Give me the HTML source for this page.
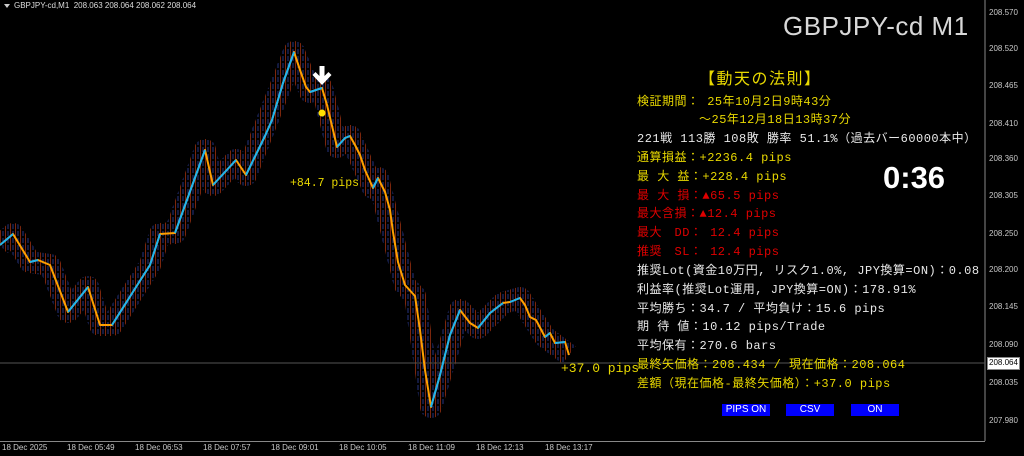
<!DOCTYPE html>
<html><head><meta charset="utf-8"><style>
body{margin:0;background:#000;width:1024px;height:456px;overflow:hidden;position:relative;font-family:"Liberation Sans","Noto Sans CJK JP",sans-serif}
.a{position:absolute;white-space:nowrap}
.p{font-family:"Liberation Sans",sans-serif;font-size:8px;color:#c8c8c8;left:989px}
.t{font-size:8px;color:#c8c8c8;top:443px}
.l{left:637px;font-size:12px;font-family:"Liberation Mono","Noto Sans CJK JP",monospace;line-height:14px;letter-spacing:.5px}
.y{color:#e8d800}.w{color:#e8e8e8}.r{color:#e00000}
.b{position:absolute;top:404px;height:12px;width:48px;background:#0000ff;color:#fff;font-size:10px;text-align:center;line-height:12px}
</style></head><body>
<svg class="a" style="left:0;top:0" width="1024" height="456">
<defs>
<pattern id="st" width="5" height="7" patternUnits="userSpaceOnUse">
<rect x="0" y="0" width="1" height="7" fill="#9a3010"/>
<rect x="2.5" y="0" width="1" height="5" fill="#3040a0"/>
</pattern>
<mask id="mk"><polyline fill="none" stroke="#fff" stroke-width="22" stroke-linejoin="round" points="0,245 13,234 30,262 50,265 68,312 88,287 100,325 112,325 150,265 160,234 175,233 205,150 213,185 236,160 246,175 294,52 310,92 322,88 337,147 350,136 373,188 378,178 405,285 415,296 431,407 460,310 478,328 503,303 520,298 545,337 569,355"/></mask>
</defs>
<rect x="0" y="30" width="580" height="400" fill="url(#st)" mask="url(#mk)" opacity=".8"/>
<line x1="985" y1="0" x2="985" y2="441" stroke="#888" stroke-width="1"/>
<line x1="0" y1="441.5" x2="985" y2="441.5" stroke="#888" stroke-width="1"/>
<line x1="0" y1="363" x2="985" y2="363" stroke="#555" stroke-width="1"/>
<g fill="none" stroke-linejoin="round">
<g stroke="#ffa000" stroke-width="2">
<polyline points="0,245 13,234 30,262 38,260 50,265 68,312 88,287 100,325 112,325 150,265 160,234 175,233 205,150 213,185 236,160 246,175 265,136 272,120 283,83 294,52 300,70 306,87 310,92 322,88 327,105 333,130 337,147 345,138 350,136 355,145 360,155 365,170 373,188 378,178 385,192 390,210 393,232 398,262 405,285 415,296 420,330 425,370 431,407 440,375 450,335 460,310 470,323 478,328 490,313 503,303 510,302 520,298 525,305 530,317 536,320 545,337 550,333 555,343 565,342 569,355"/>
</g>
<g stroke="#1eb4f0" stroke-width="2">
<polyline points="0,245 13,234"/><polyline points="30,262 38,260"/><polyline points="68,312 88,287"/>
<polyline points="112,325 150,265 160,234"/><polyline points="175,233 205,150"/><polyline points="213,185 236,160"/>
<polyline points="246,175 265,136 272,120 283,83 294,52"/><polyline points="310,92 322,88"/><polyline points="337,147 345,138 350,136"/>
<polyline points="373,188 378,178"/><polyline points="431,407 440,375 450,335 460,310"/>
<polyline points="478,328 490,313 503,303"/><polyline points="510,302 520,298"/><polyline points="545,337 550,333"/><polyline points="555,343 565,342"/>
</g></g>
<circle cx="322" cy="113" r="3.5" fill="#ffe000"/>
<path d="M319.5,66 h5 v10 l4,-4 l3,3 l-9.5,10 l-9.5,-10 l3,-3 l4,4z" fill="#fff"/>
<polygon points="4,4 10,4 7,8" fill="#ccc"/>
<rect x="987.5" y="357.5" width="32" height="12" fill="#fff" stroke="#888"/>
</svg>
<div class="a" style="left:14px;top:1px;font-size:8px;color:#ddd">GBPJPY-cd,M1&nbsp; 208.063 208.064 208.062 208.064</div>
<div class="a" style="left:783px;top:11px;font-size:26px;color:#d8d8d8;letter-spacing:.5px">GBPJPY-cd M1</div>
<div class="a p" style="top:8px">208.570</div><div class="a p" style="top:44px">208.520</div>
<div class="a p" style="top:81px">208.465</div><div class="a p" style="top:119px">208.410</div>
<div class="a p" style="top:154px">208.360</div><div class="a p" style="top:191px">208.305</div>
<div class="a p" style="top:229px">208.250</div><div class="a p" style="top:265px">208.200</div>
<div class="a p" style="top:302px">208.145</div><div class="a p" style="top:340px">208.090</div>
<div class="a p" style="top:358px;color:#000">208.064</div><div class="a p" style="top:378px">208.035</div>
<div class="a p" style="top:416px">207.980</div>
<div class="a t" style="left:2px">18 Dec 2025</div><div class="a t" style="left:67px">18 Dec 05:49</div>
<div class="a t" style="left:135px">18 Dec 06:53</div><div class="a t" style="left:203px">18 Dec 07:57</div>
<div class="a t" style="left:271px">18 Dec 09:01</div><div class="a t" style="left:339px">18 Dec 10:05</div>
<div class="a t" style="left:408px">18 Dec 11:09</div><div class="a t" style="left:476px">18 Dec 12:13</div>
<div class="a t" style="left:545px">18 Dec 13:17</div>
<div class="a y" style="left:290px;top:177px;font-size:11.5px;font-family:'Liberation Mono',monospace">+84.7 pips</div>
<div class="a y" style="left:561px;top:361px;font-size:13px;font-family:'Liberation Mono',monospace">+37.0 pips</div>
<div class="a" style="left:883px;top:160px;font-size:31px;font-weight:bold;color:#fff">0:36</div>
<div class="a l y" style="left:699px;top:71px;font-size:16px;line-height:19px;letter-spacing:1.5px">【動天の法則】</div>
<div class="a l y" style="top:95px">検証期間： 25年10月2日9時43分</div>
<div class="a l y" style="top:113px;left:699px">～25年12月18日13時37分</div>
<div class="a l w" style="top:132px">221戦 113勝 108敗 勝率 51.1%（過去バー60000本中）</div>
<div class="a l y" style="top:151px">通算損益：+2236.4 pips</div>
<div class="a l y" style="top:170px">最 大 益：+228.4 pips</div>
<div class="a l r" style="top:189px">最 大 損：▲65.5 pips</div>
<div class="a l r" style="top:207px">最大含損：▲12.4 pips</div>
<div class="a l r" style="top:226px">最大　DD： 12.4 pips</div>
<div class="a l r" style="top:245px">推奨　SL： 12.4 pips</div>
<div class="a l w" style="top:264px">推奨Lot(資金10万円, リスク1.0%, JPY換算=ON)：0.08</div>
<div class="a l w" style="top:283px">利益率(推奨Lot運用, JPY換算=ON)：178.91%</div>
<div class="a l w" style="top:302px">平均勝ち：34.7 / 平均負け：15.6 pips</div>
<div class="a l w" style="top:320px">期 待 値：10.12 pips/Trade</div>
<div class="a l w" style="top:339px">平均保有：270.6 bars</div>
<div class="a l y" style="top:358px">最終矢価格：208.434 / 現在価格：208.064</div>
<div class="a l y" style="top:377px">差額（現在価格-最終矢価格）：+37.0 pips</div>
<div class="b" style="left:722px">PIPS ON</div><div class="b" style="left:786px">CSV</div><div class="b" style="left:851px">ON</div>
</body></html>
